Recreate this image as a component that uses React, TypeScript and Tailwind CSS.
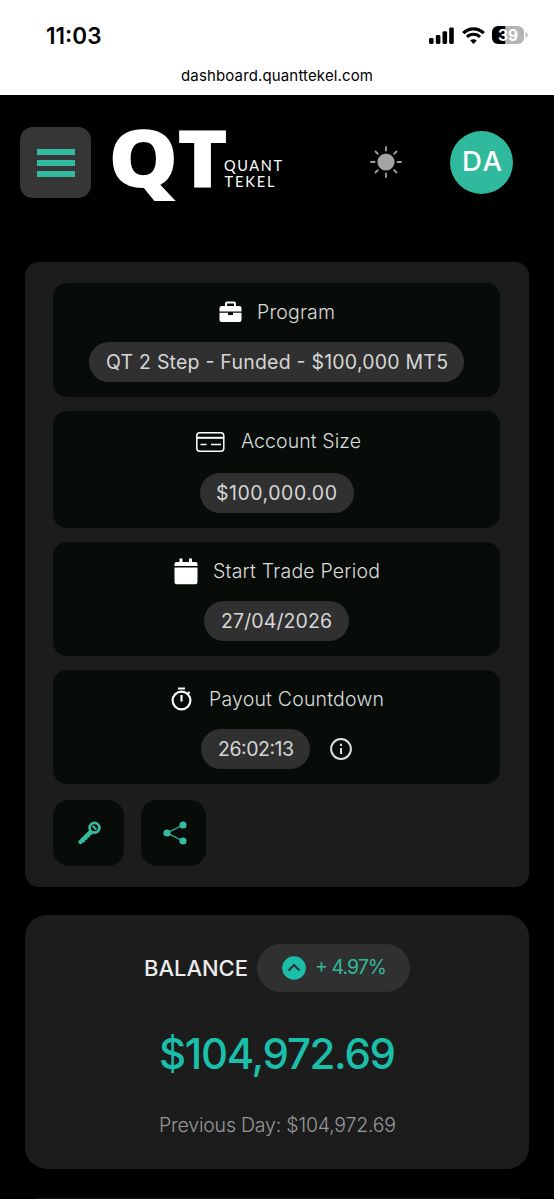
import type { ReactNode } from "react";

const PILL = "flex h-[40px] items-center justify-center rounded-full bg-[#303030] pb-[1px] font-normal text-[#d6d6d6]";

function Fit({ text, width, size, weight = 400, family = "Inter" }: { text: string; width: number; size: number; weight?: number; family?: string }) {
  return (
    <svg width={width} height={size * 1.3} className="block shrink-0 overflow-visible" fill="currentColor">
      <text x="0" y={size} textLength={width} lengthAdjust="spacing" fontSize={size} fontWeight={weight} fontFamily={`${family}, sans-serif`}>
        {text}
      </text>
    </svg>
  );
}

function StatCard({ className, title, children }: { className: string; title: ReactNode; children: ReactNode }) {
  return (
    <section className={`flex flex-col items-center rounded-[14px] bg-[#070c09] ${className}`}>
      <div className="flex h-[30px] items-center justify-center text-[#dadcda]">{title}</div>
      {children}
    </section>
  );
}

function StatusBar() {
  return (
    <div className="h-[95px] bg-white text-black">
      <div className="flex h-[62px] items-start justify-between pt-[21px] pr-[26px] pl-[46px]">
        <Fit text="11:03" width={55.5} size={22.5} weight={600} />
        <div className="flex items-center pt-[5px]">
          <svg width="25" height="17" viewBox="0 0 25 17">
            <rect x="0" y="11" width="4.6" height="6" rx="1.4" />
            <rect x="6.8" y="8" width="4.6" height="9" rx="1.4" />
            <rect x="13.5" y="4.2" width="4.6" height="12.8" rx="1.4" />
            <rect x="20.2" y="0.6" width="4.6" height="16.4" rx="1.4" />
          </svg>
          <svg className="ml-[8px]" width="23" height="17" viewBox="0 0 23 17" fill="none" stroke="black">
            <path d="M1.2 6.2a14.6 14.6 0 0 1 20.6 0" strokeWidth="3.2" />
            <path d="M5 10a9.2 9.2 0 0 1 13 0" strokeWidth="3" />
            <path d="M11.5 17l-3.3-3.4a4.7 4.7 0 0 1 6.6 0z" fill="black" stroke="none" />
          </svg>
          <svg className="ml-[7px]" width="36" height="18" viewBox="0 0 36 18">
            <path d="M6 0h7.5v18H6a6 6 0 0 1-6-6V6a6 6 0 0 1 6-6z" />
            <path d="M13.5 0H26a6 6 0 0 1 6 6v6a6 6 0 0 1-6 6H13.500z" fill="#b4b4b4" />
            <path d="M33.700 6.300c2.500.8 2.500 4.600 0 5.400z" fill="#b4b4b4" />
            <text x="16" y="14.600" fill="white" textAnchor="middle" fontFamily="Inter, sans-serif" fontSize="15.500" fontWeight="700">39</text>
          </svg>
        </div>
      </div>
      <div className="ml-[181px] pt-[4px]">
        <Fit text="dashboard.quanttekel.com" width={192} size={15} />
      </div>
    </div>
  );
}

function Header() {
  return (
    <header className="flex h-[167px] items-start pt-[32px] pl-[20px]">
      <button className="flex h-[71px] w-[71px] flex-col items-center justify-center gap-[5px] rounded-[13px] bg-[#363636]">
        <span className="h-[6px] w-[38px] bg-[#32ba9e]" />
        <span className="h-[6px] w-[38px] bg-[#32ba9e]" />
        <span className="h-[6px] w-[38px] bg-[#32ba9e]" />
      </button>
      <svg className="ml-[19px] shrink-0 overflow-visible" width="174" height="78" viewBox="110 127 174 78" fill="white">
        <text transform="translate(108.200 187) scale(1.100 1)" fontFamily="Open Sans, sans-serif" fontWeight="800" fontSize="80">Q</text>
        <text transform="translate(177 187) scale(1.080 1)" fontFamily="Open Sans, sans-serif" fontWeight="800" fontSize="80">T</text>
        <text x="224" y="171" textLength="58" fontFamily="Lato, sans-serif" fontSize="14.500">QUANT</text>
        <text x="224.500" y="187" textLength="50" fontFamily="Lato, sans-serif" fontSize="14.500">TEKEL</text>
      </svg>
      <svg className="mt-[19px] ml-[86px] shrink-0" width="32" height="32" viewBox="-16 -16 32 32" fill="#a3a3a3" stroke="#a3a3a3" strokeWidth="1.800" strokeLinecap="round">
        <circle r="8.600" stroke="none" />
        <path d="M0 11.500V15M-15 0h3.500M11.500 0H15M0-11.500V-15M-10.500-10.500l2.400 2.400M8.100 8.100l2.400 2.400M-10.500 10.500l2.400-2.400M8.100-8.100l2.400-2.400" />
      </svg>
      <div className="mt-[4px] ml-[48px] flex h-[63px] w-[63px] items-center justify-center rounded-full bg-[#2fb99d] pb-[3px] text-white">
        <Fit text="DA" width={40} size={27.500} weight={500} />
      </div>
    </header>
  );
}

export default function App() {
  return (
    <main className="h-[1199px] w-[554px] overflow-hidden bg-black font-['Inter',sans-serif]">
      <StatusBar />
      <Header />
      <div className="mx-[25px] h-[625px] rounded-[14px] bg-[#1c1c1c] pt-[21px] pr-[29px] pl-[28px]">
        <StatCard
          className="h-[114px] pt-[14px]"
          title={
            <>
              <svg className="mr-[15px]" width="23" height="22" viewBox="0 0 23 22" fill="white">
                <path fillRule="evenodd" d="M6 5V2.500A2 2 0 0 1 8 .5h7a2 2 0 0 1 2 2V5h3.500A2 2 0 0 1 22.500 7v3.500h-22V7A2 2 0 0 1 2.500 5zm2 0h7V2.500H8z" />
                <path d="M.5 11.700H9V14h5v-2.300h8.500V19a2 2 0 0 1-2 2h-18a2 2 0 0 1-2-2z" />
              </svg>
              <Fit text="Program" width={78} size={19.500} weight={300} />
            </>
          }
        >
          <div className={`${PILL} mt-[15px] w-[375px]`}>
            <Fit text="QT 2 Step - Funded - $100,000 MT5" width={342} size={19.500} />
          </div>
        </StatCard>

        <StatCard
          className="mt-[14px] h-[117px] pt-[15px]"
          title={
            <>
              <svg className="mt-[2px] mr-[16px] ml-[3px]" width="29" height="20" viewBox="0 0 29 20" fill="none" stroke="white" strokeWidth="1.500">
                <rect x=".8" y=".8" width="27" height="18.400" rx="3" />
                <path d="M1 5.800h27" strokeWidth="2" />
                <path d="M4.500 12.500h6M15 12.500h10" />
              </svg>
              <Fit text="Account Size" width={120} size={19.500} weight={300} />
            </>
          }
        >
          <div className={`${PILL} mt-[17px] w-[154px]`}>
            <Fit text="$100,000.00" width={121} size={19.500} />
          </div>
        </StatCard>

        <StatCard
          className="mt-[14px] h-[114px] pt-[14px]"
          title={
            <>
              <svg className="mr-[15px]" width="24" height="27" viewBox="0 0 24 27" fill="white">
                <path d="M.5 8V6a2 2 0 0 1 2-2h3V.5h3V4h6.500V.5h3V4h3.500a2 2 0 0 1 2 2v2z" />
                <path d="M.5 9.500h23V24a2.200 2.200 0 0 1-2.200 2.200H2.700A2.200 2.200 0 0 1 .5 24z" />
              </svg>
              <Fit text="Start Trade Period" width={167} size={19.500} weight={300} />
            </>
          }
        >
          <div className={`${PILL} mt-[15px] w-[145px]`}>
            <Fit text="27/04/2026" width={111} size={19.500} />
          </div>
        </StatCard>

        <StatCard
          className="mt-[14px] h-[114px] pt-[14px]"
          title={
            <>
              <svg className="mr-[17px] ml-[1px]" width="21" height="24" viewBox="0 0 21 24" fill="none" stroke="white" strokeWidth="2.200">
                <circle cx="10.500" cy="13.500" r="8.900" />
                <path d="M7 1.500h7M10.500 8v6.500M16.500 7l2-2" />
              </svg>
              <Fit text="Payout Countdown" width={175} size={19.500} weight={300} />
            </>
          }
        >
          <div className="mt-[15px] flex items-center">
            <div className={`${PILL} w-[109px]`}>
              <Fit text="26:02:13" width={76} size={19.500} />
            </div>
            <svg className="ml-[20px]" width="22" height="22" viewBox="0 0 22 22" fill="none" stroke="#dedede" strokeWidth="2">
              <circle cx="11" cy="11" r="9.900" />
              <path d="M11 10v6M11 5.800v2.200" />
            </svg>
          </div>
        </StatCard>

        <div className="mt-[16px] flex gap-[17px]">
          <button className="flex h-[66px] w-[71px] items-center justify-center rounded-[16px] bg-[#070c09]">
            <svg width="24" height="24" viewBox="0 0 24 24" fill="none" stroke="#38baa0">
              <circle cx="17.500" cy="6.800" r="4.900" strokeWidth="2.700" />
              <path d="M15.500 4.800l4 4" strokeWidth="2" />
              <path d="M13.500 11L3.500 21" strokeWidth="4.200" strokeLinecap="round" />
              <path d="M15 12.500l-9 9" strokeWidth="1.400" strokeDasharray="2 1.300" />
            </svg>
          </button>
          <button className="flex h-[66px] w-[65px] items-center justify-center rounded-[16px] bg-[#070c09] pl-[2px]">
            <svg width="24" height="24" viewBox="0 0 24 24" fill="#38baa0" stroke="#38baa0">
              <path d="M20 4L4 12l16 8" fill="none" strokeWidth="1.300" />
              <circle cx="20" cy="4" r="3.600" stroke="none" />
              <circle cx="4" cy="12" r="3.600" stroke="none" />
              <circle cx="20" cy="20" r="3.600" stroke="none" />
            </svg>
          </button>
        </div>
      </div>

      <section className="mx-[25px] mt-[28px] flex h-[254px] flex-col items-center rounded-[22px] bg-[#1c1c1c] pt-[29px]">
        <div className="flex items-center">
          <div className="mr-[9px] text-[#ebebeb]">
            <Fit text="BALANCE" width={104} size={22} weight={500} />
          </div>
          <div className="flex h-[48px] w-[153px] items-center rounded-full bg-[#303030] pl-[25px] text-[#32ba9e]">
            <svg className="mr-[9px]" width="24" height="24" viewBox="0 0 24 24" fill="none">
              <circle cx="12" cy="12" r="11.800" fill="#1bbfa9" />
              <path d="M6.500 14.500L12 9l5.500 5.500" stroke="#303030" strokeWidth="2" />
            </svg>
            <div className="pb-[2px]">
              <Fit text="+ 4.97%" width={72} size={19.500} weight={400} />
            </div>
          </div>
        </div>
        <div className="mt-[35px] text-[#1bbfa9]">
          <Fit text="$104,972.69" width={237} size={42} weight={500} />
        </div>
        <div className="mt-[30px] text-[#989898]">
          <Fit text="Previous Day: $104,972.69" width={237} size={19.500} weight={300} />
        </div>
      </section>
      <div className="mx-[35px] mt-[29px] h-[1px] bg-[#141414]" />
    </main>
  );
}
